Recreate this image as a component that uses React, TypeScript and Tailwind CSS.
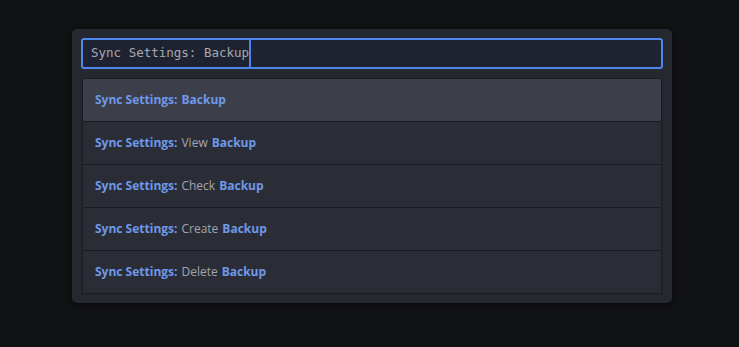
import React, { useState } from "react";

type Command = {
  id: number;
  middle: string;
};

const commands: Command[] = [
  { id: 1, middle: "" },
  { id: 2, middle: "View" },
  { id: 3, middle: "Check" },
  { id: 4, middle: "Create" },
  { id: 5, middle: "Delete" },
];

const App: React.FC = () => {
  const [query] = useState<string>("Sync Settings: Backup");
  const [selected, setSelected] = useState<number>(1);

  return (
    <div className="w-[739px] h-[347px] bg-[#111214] pt-[29px] flex justify-center">
      <div className="w-[600px] h-[274px] bg-[#262830] rounded-[5px] px-[9px] pt-[9px] shadow-[0_2px_6px_rgba(0,0,0,0.5)] ml-[5px]">
        {/* search box */}
        <div className="h-[31px] border-2 border-[#4f86ec] rounded-[3px] bg-[#1f2331] flex items-center pl-[8px] font-['DejaVu_Sans_Mono',monospace] text-[12.5px] text-[#a6a9b1]">
          <span>{query}</span>
          <span className="w-[2px] h-full bg-[#4f86ec]" />
        </div>

        {/* results */}
        <div className="mt-[9px] mx-[1px] border border-[#1a1b20] font-['Open_Sans',sans-serif] text-[12px]">
          {commands.map((cmd, idx) => (
            <div
              key={cmd.id}
              onClick={() => setSelected(cmd.id)}
              className={
                "flex items-center pl-[12px] " +
                (idx > 0 ? "h-[43px] border-t border-[#1a1b20] " : "h-[42px] ") +
                (selected === cmd.id ? "bg-[#3c3e4a]" : "bg-[#2a2d36]")
              }
            >
              <span className="font-bold text-[#6f98e8]">Sync Settings:</span>
              {cmd.middle && <span className="text-[#a2a5ad] ml-[4px]">{cmd.middle}</span>}
              <span className="font-bold text-[#6f98e8] ml-[4px]">Backup</span>
            </div>
          ))}
        </div>
      </div>
    </div>
  );
};

export default App;
